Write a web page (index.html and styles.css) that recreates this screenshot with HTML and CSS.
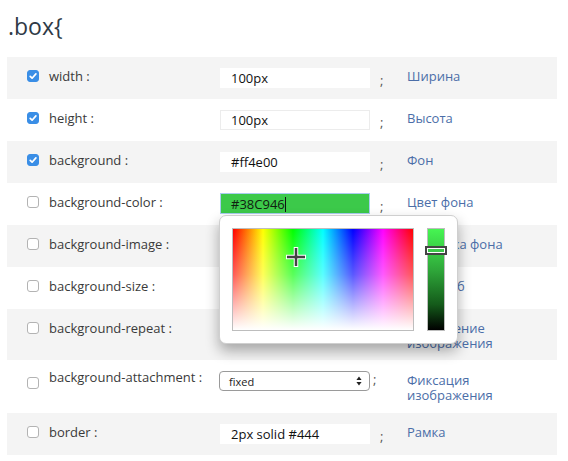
FILE: index.html
```html
<!DOCTYPE html>
<html lang="ru">
<head>
<meta charset="utf-8">
<title>.box</title>
<link rel="stylesheet" href="styles.css">
</head>
<body>
<div class="page">
  <h1 class="title">.box{</h1>
  <div class="rows">
    <div class="row alt">
      <span class="check on"><svg viewBox="0 0 12 12" width="12" height="12"><path d="M3.2 6.3l1.9 1.9 3.8-4.3" fill="none" stroke="#fff" stroke-width="1.7" stroke-linecap="round" stroke-linejoin="round"/></svg></span>
      <span class="label">width :</span>
      <div class="value"><div class="input">100px</div></div>
      <span class="semi">;</span>
      <span class="desc">Ширина</span>
    </div>
    <div class="row">
      <span class="check on"><svg viewBox="0 0 12 12" width="12" height="12"><path d="M3.2 6.3l1.9 1.9 3.8-4.3" fill="none" stroke="#fff" stroke-width="1.7" stroke-linecap="round" stroke-linejoin="round"/></svg></span>
      <span class="label">height :</span>
      <div class="value"><div class="input">100px</div></div>
      <span class="semi">;</span>
      <span class="desc">Высота</span>
    </div>
    <div class="row alt">
      <span class="check on"><svg viewBox="0 0 12 12" width="12" height="12"><path d="M3.2 6.3l1.9 1.9 3.8-4.3" fill="none" stroke="#fff" stroke-width="1.7" stroke-linecap="round" stroke-linejoin="round"/></svg></span>
      <span class="label">background :</span>
      <div class="value"><div class="input">#ff4e00</div></div>
      <span class="semi">;</span>
      <span class="desc">Фон</span>
    </div>
    <div class="row">
      <span class="check"></span>
      <span class="label">background-color :</span>
      <div class="value">
        <div class="input focus">#38C946<span class="caret"></span></div>
        <div class="picker">
          <div class="field">
            <svg class="cross" viewBox="0 0 22 22" width="22" height="22"><path d="M1 11H21M11 1V21" stroke="#fff" stroke-width="4.5"/><path d="M2 11H20M11 2V20" stroke="#444" stroke-width="2.5"/></svg>
          </div>
          <div class="slider"><span class="handle"></span></div>
        </div>
      </div>
      <span class="semi">;</span>
      <span class="desc">Цвет фона</span>
    </div>
    <div class="row alt">
      <span class="check"></span>
      <span class="label">background-image :</span>
      <div class="value"></div>
      <span class="semi">;</span>
      <span class="desc">Картинка фона</span>
    </div>
    <div class="row">
      <span class="check"></span>
      <span class="label">background-size :</span>
      <div class="value"></div>
      <span class="semi">;</span>
      <span class="desc">Масштаб</span>
    </div>
    <div class="row alt row-two">
      <span class="check"></span>
      <span class="label">background-repeat :</span>
      <div class="value"></div>
      <span class="semi">;</span>
      <span class="desc">Повторение<br>изображения</span>
    </div>
    <div class="row row-select">
      <span class="check"></span>
      <span class="label">background-attachment :</span>
      <div class="value">
        <div class="select"><span>fixed</span><svg viewBox="0 0 6 10" width="6" height="10"><path d="M3 0.5L5.6 4H0.4z M3 9.5L0.4 6H5.6z" fill="#222"/></svg></div>
      </div>
      <span class="semi">;</span>
      <span class="desc">Фиксация<br>изображения</span>
    </div>
    <div class="row alt">
      <span class="check"></span>
      <span class="label">border :</span>
      <div class="value"><div class="input">2px solid #444</div></div>
      <span class="semi">;</span>
      <span class="desc">Рамка</span>
    </div>
  </div>
</div>
</body>
</html>
```

FILE: styles.css
```css
html, body {
  margin: 0;
  padding: 0;
  background: #fff;
}

body {
  font-family: "Open Sans", "Noto Sans", sans-serif;
  color: #333;
}

.page {
  padding: 0 11px 0 7px;
}

.title {
  margin: 0;
  padding: 12px 1px 17px;
  font-size: 23px;
  line-height: 28px;
  font-weight: 400;
  color: #2f3a46;
}

.row {
  display: flex;
  align-items: flex-start;
  padding: 11px 0 11px 20px;
  min-height: 20px;
}

.row.alt {
  background: #f4f4f4;
}

.row-two {
  padding-bottom: 9px;
}

.check {
  flex: none;
  width: 12px;
  height: 12px;
  margin-top: 2px;
  box-sizing: border-box;
  border: 1px solid #b3b3b3;
  border-radius: 3px;
  background: #fff;
}

.check svg {
  display: block;
  margin: -1px;
}

.check.on {
  border-color: #3a8ee6;
  background: #3a8ee6;
}

.label {
  flex: none;
  width: 170px;
  margin-left: 10px;
  font-size: 13px;
  line-height: 16px;
  color: #3a3a3a;
  white-space: nowrap;
}

.value {
  flex: none;
  width: 151px;
  height: 20px;
  position: relative;
}

.input {
  box-sizing: border-box;
  width: 150px;
  height: 20px;
  margin-left: 1px;
  padding: 0 10px;
  background: #fff;
  border: 1px solid #ececec;
  font-size: 13px;
  line-height: 19px;
  color: #111;
  white-space: nowrap;
}

.row.alt .input {
  border-color: #fff;
}

.input.focus {
  height: 21px;
  margin-top: -1px;
  background: #3cc94a;
  border-color: #a9cdef;
  line-height: 20px;
  color: #102010;
}

.caret {
  display: inline-block;
  width: 1px;
  height: 15px;
  background: #111;
  vertical-align: -3px;
}

.semi {
  flex: none;
  width: 37px;
  height: 20px;
  box-sizing: border-box;
  padding-left: 10px;
  padding-top: 4px;
  font-size: 13px;
  line-height: 16px;
  color: #555;
}

.desc {
  flex: none;
  width: 140px;
  padding-top: 1px;
  font-size: 13px;
  line-height: 15px;
  color: #4b6ea8;
}

.row-select {
  padding-bottom: 10px;
}

.row-select .check {
  margin-top: 6px;
}

.row-select .label {
  margin-top: -2px;
}

.row-select .semi {
  padding-left: 3px;
  padding-top: 0;
}

.row-select .desc {
  padding-top: 2px;
}

.select {
  box-sizing: border-box;
  width: 151px;
  height: 20px;
  display: flex;
  align-items: center;
  justify-content: space-between;
  padding: 0 7px 0 9px;
  border: 1px solid #9a9a9a;
  border-radius: 4px;
  background: #fff;
  font-size: 11px;
  color: #222;
}

.select svg {
  display: block;
}

.picker {
  position: absolute;
  z-index: 10;
  left: 0;
  top: 21px;
  display: flex;
  gap: 13px;
  padding: 12px;
  background: #fff;
  border: 1px solid #cfcfcf;
  border-radius: 7px;
  box-shadow: 0 7px 14px rgba(0, 0, 0, 0.32);
}

.field {
  position: relative;
  box-sizing: border-box;
  width: 182px;
  height: 103px;
  border: 1px solid #bdbdbd;
  background:
    linear-gradient(to bottom, rgba(255, 255, 255, 0) 0%, rgba(255, 255, 255, 0.35) 45%, #fff 100%),
    linear-gradient(to right, #f00 0%, #ff0 16.66%, #0f0 33.33%, #0ff 50%, #00f 66.66%, #f0f 83.33%, #f00 100%);
}

.cross {
  position: absolute;
  left: 52px;
  top: 17px;
}

.slider {
  position: relative;
  box-sizing: border-box;
  width: 18px;
  height: 103px;
  border: 1px solid #bdbdbd;
  background: linear-gradient(to bottom, #46f552 0%, #2fa83a 40%, #145a1a 75%, #000 100%);
}

.handle {
  position: absolute;
  left: -3px;
  top: 17px;
  box-sizing: border-box;
  width: 22px;
  height: 9px;
  border: 2px solid #444;
  background: #3cc94a;
  box-shadow: inset 0 0 0 1px #fff;
}
```
